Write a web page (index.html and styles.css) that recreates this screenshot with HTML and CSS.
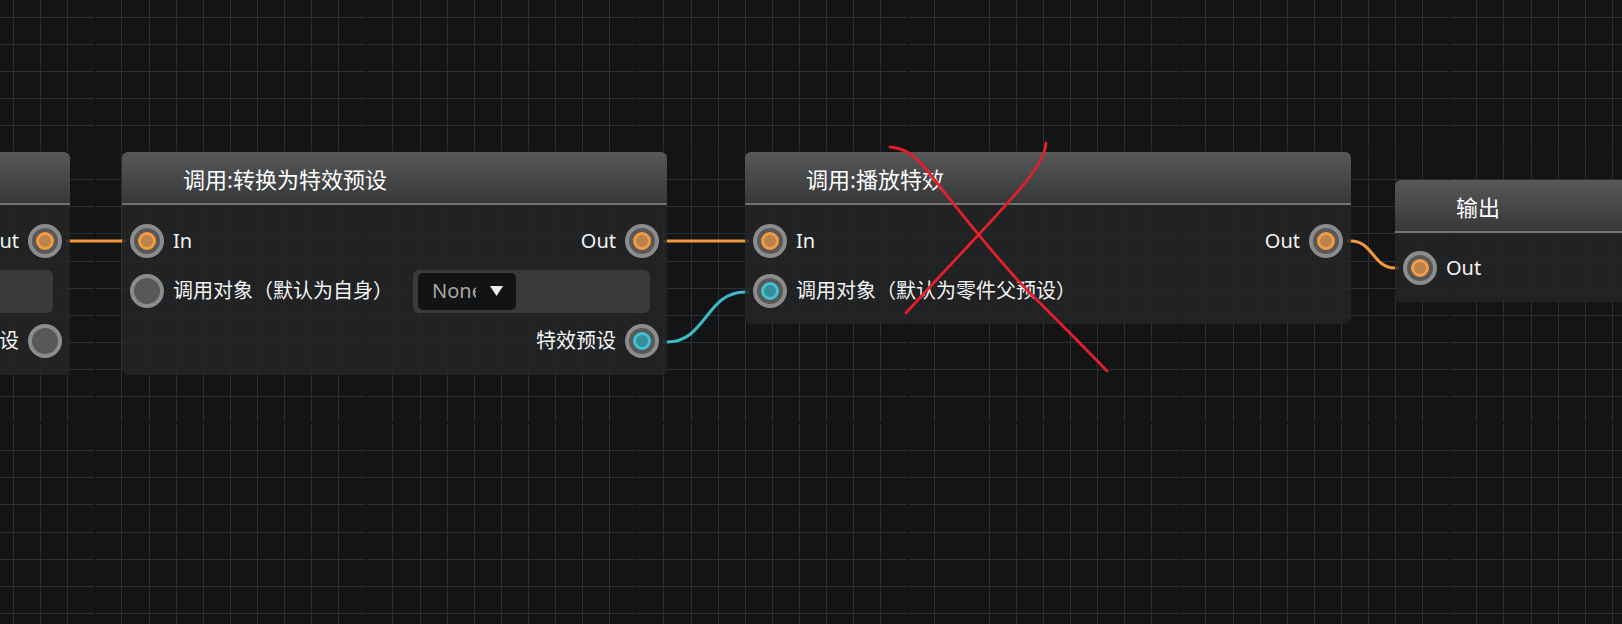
FILE: index.html
```html
<!DOCTYPE html>
<html lang="zh-CN">
<head>
<meta charset="utf-8">
<title>Node Graph</title>
<link rel="stylesheet" href="styles.css">
</head>
<body>
<div class="canvas">
  <svg class="wires" width="1622" height="624" viewBox="0 0 1622 624">
    <path class="wire orange" d="M66 241 H126"/>
    <path class="wire orange" d="M663 241 H749"/>
    <path class="wire teal" d="M663 342 H667 C706 342 706 292 745 292 H749"/>
    <path class="wire orange" d="M1347 241 H1351 C1373 241 1373 268 1395 268 H1399"/>
  </svg>

  <div class="node n1">
    <div class="head"></div>
    <div class="body">
      <div class="row end"><span class="label">Out</span><span class="port"><span class="dot orange"></span></span></div>
      <div class="row"><div class="field"></div></div>
      <div class="row end"><span class="label">特效预设</span><span class="port"></span></div>
    </div>
  </div>

  <div class="node n2">
    <div class="head">调用:转换为特效预设</div>
    <div class="body">
      <div class="row split">
        <div class="side"><span class="port"><span class="dot orange"></span></span><span class="label">In</span></div>
        <div class="side"><span class="label">Out</span><span class="port"><span class="dot orange"></span></span></div>
      </div>
      <div class="row">
        <span class="port"></span><span class="label">调用对象（默认为自身）</span>
        <div class="combo">
          <div class="select">
            <span class="select-text">None</span>
            <svg class="caret" width="13" height="10" viewBox="0 0 13 10"><polygon points="0,0 13,0 6.5,10"/></svg>
          </div>
        </div>
      </div>
      <div class="row end"><span class="label">特效预设</span><span class="port"><span class="dot teal"></span></span></div>
    </div>
  </div>

  <div class="node n3">
    <div class="head">调用:播放特效</div>
    <div class="body">
      <div class="row split">
        <div class="side"><span class="port"><span class="dot orange"></span></span><span class="label">In</span></div>
        <div class="side"><span class="label">Out</span><span class="port"><span class="dot orange"></span></span></div>
      </div>
      <div class="row"><span class="port"><span class="dot teal"></span></span><span class="label">调用对象（默认为零件父预设）</span></div>
    </div>
  </div>

  <div class="node n4">
    <div class="head">输出</div>
    <div class="body">
      <div class="row"><span class="port"><span class="dot orange"></span></span><span class="label">Out</span></div>
    </div>
  </div>

  <svg class="marks" width="1622" height="624" viewBox="0 0 1622 624">
    <path d="M890 147 C905 148 915 156 925 168 C955 205 995 258 1030 293 C1060 323 1085 348 1107 371"/>
    <path d="M1046 143 C1045 170 1000 210 906 313"/>
  </svg>
</div>
</body>
</html>
```

FILE: styles.css
```css
* {
  box-sizing: border-box;
  margin: 0;
  padding: 0;
}

html,
body {
  width: 1622px;
  height: 624px;
  overflow: hidden;
  background: #131416;
}

body {
  font-family: "Noto Sans", "Noto Sans CJK SC", sans-serif;
  color: #f4f4f4;
}

.canvas {
  position: relative;
  width: 1622px;
  height: 624px;
  overflow: hidden;
  background-color: #131416;
  background-image:
    repeating-linear-gradient(90deg, transparent 0 94px, #121315 94px 96px, transparent 96px 271px),
    repeating-linear-gradient(180deg, transparent 0 151.5px, #121315 151.5px 153.5px, transparent 153.5px 271px),
    repeating-linear-gradient(90deg, transparent 0 13px, #2e2f32 13px 14px, transparent 14px 27.1px),
    repeating-linear-gradient(180deg, transparent 0 16.6px, #2e2f32 16.6px 17.6px, transparent 17.6px 27.1px);
}

.wires,
.marks {
  position: absolute;
  left: 0;
  top: 0;
  pointer-events: none;
}

.wires {
  z-index: 0;
}

.marks {
  z-index: 3;
}

.wire {
  fill: none;
  stroke-width: 3;
}

.wire.orange {
  stroke: #f3993d;
}

.wire.teal {
  stroke: #3db9c7;
}

.marks path {
  fill: none;
  stroke: #e3202a;
  stroke-width: 2.8;
  stroke-linecap: round;
}

.node {
  position: absolute;
  z-index: 1;
  display: flex;
  flex-direction: column;
  border-radius: 6px;
  overflow: hidden;
}

.n1 {
  left: -200px;
  top: 152px;
  width: 270px;
  height: 223px;
}

.n2 {
  left: 122px;
  top: 152px;
  width: 545px;
  height: 223px;
}

.n3 {
  left: 745px;
  top: 152px;
  width: 606px;
  height: 172px;
}

.n4 {
  left: 1395px;
  top: 180px;
  width: 320px;
  height: 122px;
}

.n4 .body {
  padding-top: 10px;
}

.head {
  flex: none;
  height: 53px;
  border-bottom: 2px solid #717272;
  background: linear-gradient(rgba(92, 93, 94, 0.93), rgba(57, 58, 59, 0.93));
  display: flex;
  align-items: center;
  padding-left: 61px;
  font-size: 22px;
  color: #fff;
  white-space: nowrap;
}

.body {
  flex: 1;
  background: rgba(35, 36, 38, 0.85);
  padding-top: 11px;
}

.row {
  height: 50px;
  display: flex;
  align-items: center;
  padding: 0 8px;
}

.row.end {
  justify-content: flex-end;
}

.row.split {
  justify-content: space-between;
}

.side {
  display: flex;
  align-items: center;
}

.label {
  font-size: 20px;
  line-height: 1;
  white-space: nowrap;
}

.port + .label {
  margin-left: 9px;
}

.label + .port {
  margin-left: 9px;
}

.port {
  flex: none;
  width: 34px;
  height: 34px;
  border-radius: 50%;
  border: 4px solid #8c8c8c;
  background: #585858;
  display: flex;
  align-items: center;
  justify-content: center;
}

.dot {
  width: 18px;
  height: 18px;
  border-radius: 50%;
  border: 3px solid;
}

.dot.orange {
  border-color: #f79c3e;
  background: #b9834f;
}

.dot.teal {
  border-color: #40c2d2;
  background: #3a8e99;
}

.field {
  flex: 1;
  height: 43px;
  background: #3a3a3b;
  border-radius: 6px;
  margin-right: 9px;
}

.combo {
  flex: 1;
  height: 43px;
  margin: 0 9px 0 20px;
  padding: 3px 5px;
  background: #3a3a3b;
  border-radius: 6px;
  display: flex;
}

.select {
  width: 98px;
  height: 37px;
  background: #121315;
  border-radius: 5px;
  display: flex;
  align-items: center;
  padding-left: 14px;
}

.select-text {
  width: 44px;
  overflow: hidden;
  font-size: 20px;
  line-height: 1;
  color: #a8a8a8;
  white-space: nowrap;
}

.caret {
  margin-left: 14px;
  fill: #ececec;
}
```
